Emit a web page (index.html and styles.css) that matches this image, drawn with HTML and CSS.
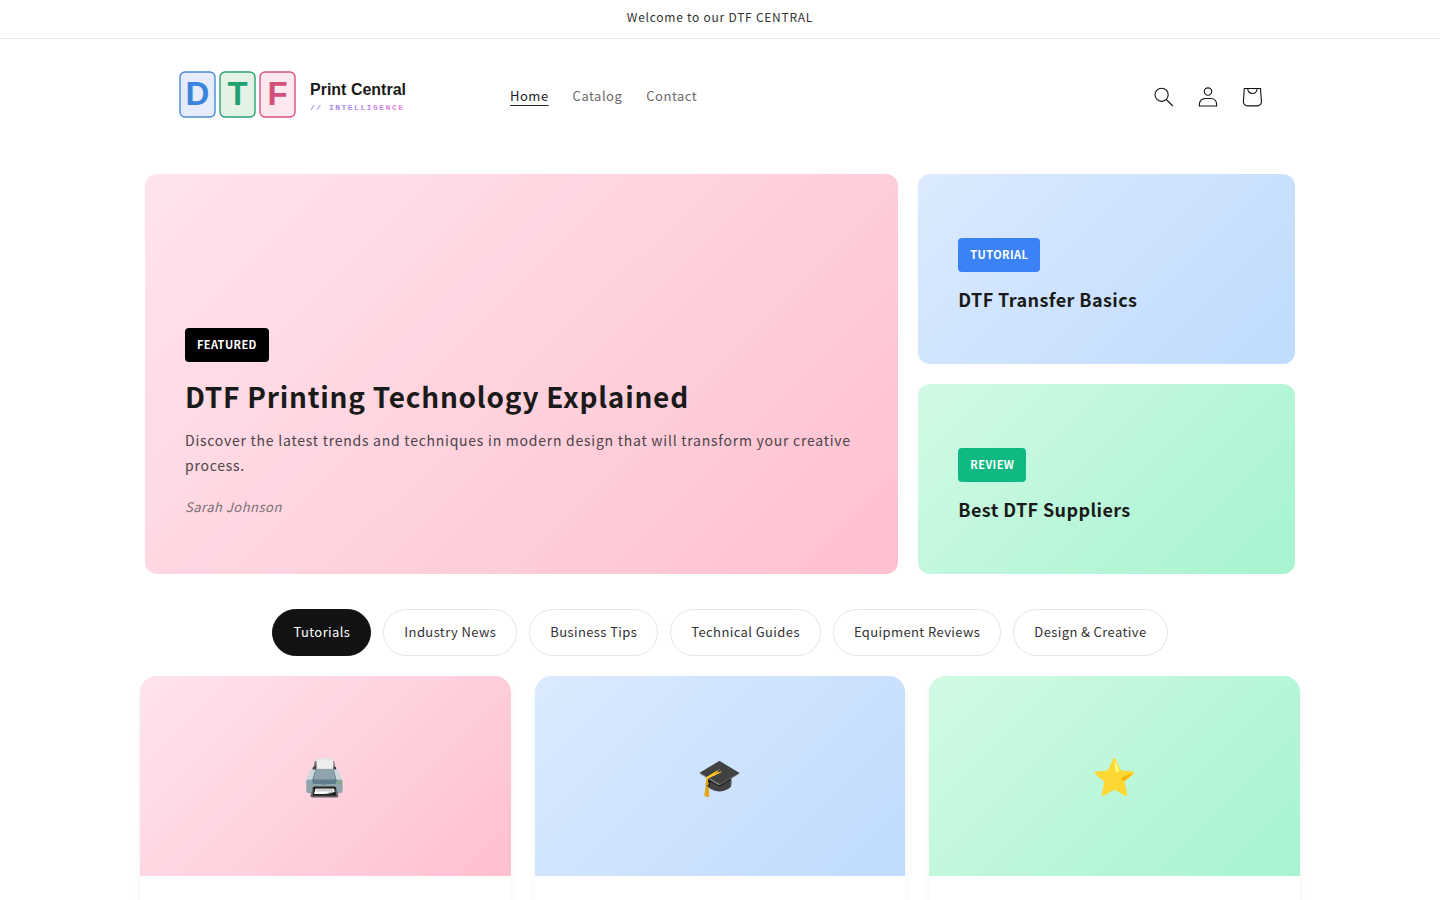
FILE: index.html
```html
<!DOCTYPE html>
<html lang="en">
<head>
<meta charset="utf-8">
<meta name="viewport" content="width=device-width, initial-scale=1">
<title>DTF Print Central</title>
<link rel="stylesheet" href="styles.css">
</head>
<body>
<div class="announcement"><p class="announcement-text">Welcome to our DTF CENTRAL</p></div>
<header class="header">
  <a class="logo" href="#" aria-label="DTF Print Central">
    <svg class="logo-art" width="240" height="60" viewBox="0 0 240 60" role="img" aria-hidden="true">
      <defs><linearGradient id="tag" x1="0" x2="1" y1="0" y2="0"><stop offset="0" stop-color="#6f6bea"/><stop offset=".5" stop-color="#a96be8"/><stop offset="1" stop-color="#dc6ad0"/></linearGradient></defs>
      <g stroke-width="1.4">
        <rect x="10" y="7" width="35" height="45" rx="5" fill="#e6ecfc" stroke="#4a8ad4"/>
        <rect x="50" y="7" width="35" height="45" rx="5" fill="#e4f2e6" stroke="#27a273"/>
        <rect x="90" y="7" width="35" height="45" rx="5" fill="#fce8ed" stroke="#d4547f"/>
      </g>
      <g class="logo-letters" text-anchor="middle">
        <text x="27.5" y="40" fill="#3a84dc">D</text>
        <text x="67.5" y="40" fill="#1fa070">T</text>
        <text x="107.5" y="40" fill="#d24f7c">F</text>
      </g>
      <text class="logo-name" x="140" y="30">Print Central</text>
      <text class="logo-tag" x="140" y="45" fill="url(#tag)">// INTELLIGENCE</text>
    </svg>
  </a>
  <nav class="nav" aria-label="Main">
    <a class="nav-link nav-link-active" href="#" aria-current="page">Home</a>
    <a class="nav-link" href="#">Catalog</a>
    <a class="nav-link" href="#">Contact</a>
  </nav>
  <div class="header-icons">
    <button class="icon-button" type="button" aria-label="Search">
      <svg width="20" height="20" viewBox="0 0 20 20" fill="none" stroke="#121212" stroke-width="1.1"><circle cx="7.6" cy="7.8" r="6.6"/><path d="M12.3 12.5 18.8 19"/></svg>
    </button>
    <a class="icon-button" href="#" aria-label="Log in">
      <svg width="20" height="20" viewBox="0 0 20 20" fill="none" stroke="#121212" stroke-width="1.1"><circle cx="10" cy="4.6" r="3.700"/><path d="M1.400 19v-1.400c0-3.600 2.300-6.100 5.800-6.100h5.600c3.500 0 5.800 2.500 5.800 6.100V19Z"/></svg>
    </a>
    <a class="icon-button" href="#" aria-label="Cart">
      <svg width="20" height="20" viewBox="0 0 20 20" fill="none" stroke="#121212" stroke-width="1.1"><path d="M2.300 1.500h16.200l.9 13c.1 2.700-1.800 4.400-4.300 4.400H5.700c-2.500 0-4.400-1.700-4.300-4.400Z"/><path d="M5.700 1.500c0 6.700 9.400 6.700 9.400 0"/></svg>
    </a>
  </div>
</header>
<main>
  <section class="hero">
    <article class="feature feature-large pink">
      <span class="badge">FEATURED</span>
      <h1 class="feature-title">DTF Printing Technology Explained</h1>
      <p class="feature-text">Discover the latest trends and techniques in modern design that will transform your creative process.</p>
      <p class="feature-author">Sarah Johnson</p>
    </article>
    <article class="feature blue">
      <span class="badge badge-blue">TUTORIAL</span>
      <h2 class="side-title">DTF Transfer Basics</h2>
    </article>
    <article class="feature green">
      <span class="badge badge-green">REVIEW</span>
      <h2 class="side-title">Best DTF Suppliers</h2>
    </article>
  </section>
  <div class="filters">
    <button class="pill pill-active" type="button">Tutorials</button>
    <button class="pill" type="button">Industry News</button>
    <button class="pill" type="button">Business Tips</button>
    <button class="pill" type="button">Technical Guides</button>
    <button class="pill" type="button">Equipment Reviews</button>
    <button class="pill" type="button">Design &amp; Creative</button>
  </div>
  <section class="cards">
    <article class="card"><div class="card-media pink">🖨️</div><div class="card-body"></div></article>
    <article class="card"><div class="card-media blue">🎓</div><div class="card-body"></div></article>
    <article class="card"><div class="card-media green">⭐</div><div class="card-body"></div></article>
  </section>
</main>
</body>
</html>
```

FILE: styles.css
```css
* { box-sizing: border-box; }
body {
  margin: 0;
  height: 100vh;
  overflow: hidden;
  background: #fff;
  color: #121212;
  font-family: "Noto Sans CJK SC", "Noto Sans", sans-serif;
  letter-spacing: 0.4px;
}
h1, h2, p { margin: 0; }

.announcement { border-bottom: 1px solid #ebebeb; padding: 6px 16px 10px; text-align: center; }
.announcement-text { font-size: 12px; line-height: 22px; letter-spacing: 0.75px; color: #333; }

.header {
  display: flex;
  align-items: center;
  max-width: 1200px;
  margin: 0 auto;
  padding: 26px 46px 29px 50px;
}
.logo, .logo-art { display: block; }
.logo-letters { font: bold 33px "Liberation Sans", Arial, sans-serif; letter-spacing: 0; }
.logo-name { font: bold 16px "Liberation Sans", Arial, sans-serif; letter-spacing: 0; fill: #1a1a1a; }
.logo-tag { font: bold 8px "Liberation Mono", monospace; letter-spacing: 1.5px; opacity: 0.8; }
.nav { display: flex; gap: 24px; margin-left: 100px; padding-top: 2px; }
.nav-link { color: #6a6a6a; font-size: 13px; line-height: 20px; letter-spacing: 0.5px; text-decoration: none; }
.nav-link-active { color: #222; text-decoration: underline; text-underline-offset: 4px; }
.header-icons { display: flex; margin-left: auto; padding-top: 4px; }
.icon-button {
  display: flex;
  align-items: center;
  justify-content: center;
  width: 44px;
  height: 44px;
  padding: 0;
  border: 0;
  background: none;
}

.pink { background: linear-gradient(135deg, #ffe4ec, #ffc0d0); }
.blue { background: linear-gradient(135deg, #dbeafe, #bfdbfe); }
.green { background: linear-gradient(135deg, #d1fae5, #a7f3d0); }

.hero {
  display: grid;
  grid-template-columns: 2fr 1fr;
  grid-template-rows: repeat(2, minmax(190px, auto));
  gap: 20px;
  max-width: 1150px;
  margin: 20px auto 0;
}
.feature {
  display: flex;
  flex-direction: column;
  align-items: flex-start;
  justify-content: flex-end;
  padding: 40px;
  border-radius: 12px;
}
.feature-large { grid-row: span 2; padding-bottom: 55px; }
.badge {
  padding: 5px 12px 7px;
  border-radius: 4px;
  background: #000;
  color: #fff;
  font-size: 11px;
  line-height: 22px;
  font-weight: 700;
}
.badge-blue { background: #3b82f6; }
.badge-green { background: #10b981; }
.feature-title { margin-top: 14px; font-size: 28px; line-height: 40px; font-weight: 700; letter-spacing: 0.75px; color: #1a1a1a; }
.feature-text { margin-top: 12px; font-size: 14px; line-height: 25px; letter-spacing: 0.75px; color: #4c4448; }
.feature-author { margin-top: 16px; font-size: 13px; line-height: 25px; letter-spacing: 0.5px; font-style: italic; color: #7a7074; }
.side-title { margin: 14px 0 12px; font-size: 18px; line-height: 26px; font-weight: 700; color: #1a1a1a; }

.filters { display: flex; flex-wrap: wrap; justify-content: center; gap: 12px; margin-top: 35px; }
.pill {
  padding: 11px 20px 13px;
  border: 1px solid #e5e5e5;
  border-radius: 24px;
  background: #fff;
  color: #333;
  font-family: inherit;
  font-size: 13px;
  line-height: 21px;
  letter-spacing: 0.4px;
}
.pill-active { border-color: #121212; background: #121212; color: #fff; }

.cards {
  display: grid;
  grid-template-columns: repeat(3, 1fr);
  gap: 24px;
  max-width: 1160px;
  margin: 20px auto 0;
}
.card { overflow: hidden; border-radius: 16px 16px 0 0; background: #fff; box-shadow: 0 4px 6px rgba(0, 0, 0, 0.06); }
.card-media {
  display: flex;
  align-items: center;
  justify-content: center;
  height: 200px;
  padding-top: 3px;
  font-family: "Noto Color Emoji", sans-serif;
  font-size: 36px;
  line-height: 48px;
}
.card-body { min-height: 24px; }
```
